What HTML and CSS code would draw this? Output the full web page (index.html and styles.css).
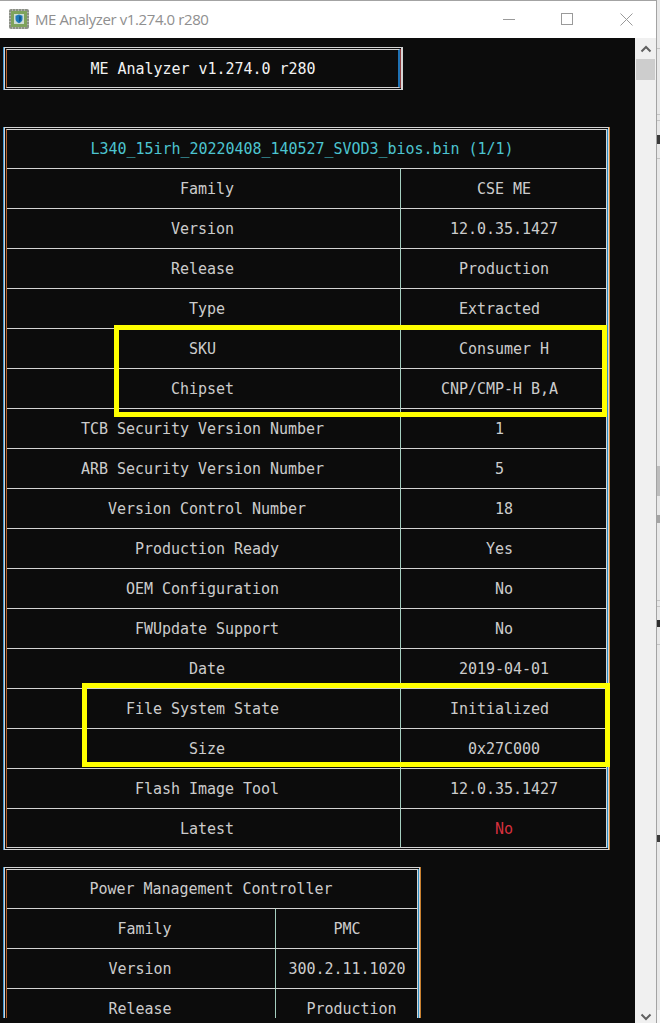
FILE: index.html
```html
<!DOCTYPE html>
<html lang="en">
<head>
<meta charset="utf-8">
<title>ME Analyzer v1.274.0 r280</title>
<link rel="stylesheet" href="styles.css">
</head>
<body>
<div class="window">
  <header class="titlebar">
    <svg class="app-icon" viewBox="0 0 20 20" width="20" height="20" aria-hidden="true">
      <rect x="0" y="0" width="20" height="20" rx="2" fill="#8b8f86"/>
      <path d="M0 3.500h20M0 6.500h20M0 9.500h20M0 12.500h20M0 15.500h20M3.500 0v20M6.500 0v20M9.500 0v20M12.500 0v20M15.500 0v20" stroke="#d9dcd4" stroke-width="1" opacity=".5"/>
      <rect x="2" y="2" width="16" height="16" fill="#7fa35c"/>
      <rect x="5" y="5" width="10" height="10" fill="#cfdcd6"/>
      <path d="M10 5.500l3.500 1.200v3.200c0 2-1.500 3.400-3.500 4.300-2-.9-3.500-2.300-3.500-4.300V6.700z" fill="#1f78b8"/>
      <path d="M10 7l2 .8v2.200c0 1.200-.8 2-2 2.700z" fill="#14558c"/>
    </svg>
    <span class="window-title">ME Analyzer v1.274.0 r280</span>
    <div class="controls">
      <svg class="ctl ctl-min" width="12" height="12" viewBox="0 0 12 12" aria-hidden="true"><path d="M0 6.500h12" stroke="#9a9a9a"/></svg>
      <svg class="ctl ctl-max" width="12" height="12" viewBox="0 0 12 12" aria-hidden="true"><rect x=".5" y=".5" width="11" height="11" fill="none" stroke="#9a9a9a"/></svg>
      <svg class="ctl ctl-close" width="13" height="13" viewBox="0 0 13 13" aria-hidden="true"><path d="M.5.5l12 12M12.500.5l-12 12" stroke="#9a9a9a" fill="none"/></svg>
    </div>
  </header>
  <div class="client">
    <main class="console">
      <div class="viewport">
        <section class="frame frame-banner">
          <div class="frame-inner">
            <div class="banner">ME Analyzer v1.274.0 r280</div>
          </div>
        </section>

        <section class="frame frame-main">
          <div class="frame-inner">
            <table class="grid grid-main">
              <colgroup><col class="c1-main"><col></colgroup>
              <tr><th colspan="2" class="file">L340_15irh_20220408_140527_SVOD3_bios.bin (1/1)</th></tr>
              <tr><td class="even">Family</td><td class="even">CSE ME</td></tr>
              <tr><td>Version</td><td class="even">12.0.35.1427</td></tr>
              <tr><td>Release</td><td class="even">Production</td></tr>
              <tr><td class="even">Type</td><td>Extracted</td></tr>
              <tr><td>SKU</td><td class="even">Consumer H</td></tr>
              <tr><td>Chipset</td><td>CNP/CMP-H B,A</td></tr>
              <tr><td>TCB Security Version Number</td><td>1</td></tr>
              <tr><td>ARB Security Version Number</td><td>5</td></tr>
              <tr><td class="even">Version Control Number</td><td class="even">18</td></tr>
              <tr><td class="even">Production Ready</td><td>Yes</td></tr>
              <tr><td>OEM Configuration</td><td class="even">No</td></tr>
              <tr><td class="even">FWUpdate Support</td><td class="even">No</td></tr>
              <tr><td class="even">Date</td><td class="even">2019-04-01</td></tr>
              <tr><td>File System State</td><td>Initialized</td></tr>
              <tr><td class="even">Size</td><td class="even">0x27C000</td></tr>
              <tr><td class="even">Flash Image Tool</td><td class="even">12.0.35.1427</td></tr>
              <tr><td class="even">Latest</td><td class="even alert">No</td></tr>
            </table>
          </div>
        </section>

        <section class="frame frame-pmc">
          <div class="frame-inner">
            <table class="grid grid-pmc">
              <colgroup><col class="c1-pmc"><col></colgroup>
              <tr><th colspan="2">Power Management Controller</th></tr>
              <tr><td class="even">Family</td><td>PMC</td></tr>
              <tr><td>Version</td><td>300.2.11.1020</td></tr>
              <tr><td>Release</td><td class="even">Production</td></tr>
            </table>
          </div>
        </section>
      </div>
      <div class="mark mark-sku"></div>
      <div class="mark mark-fs"></div>
    </main>
    <aside class="scrollbar">
      <svg width="12" height="8" viewBox="0 0 12 8" aria-hidden="true"><path d="M1.500 6.500L6 2l4.500 4.500" fill="none" stroke="#606060" stroke-width="2"/></svg>
      <div class="thumb"></div>
      <svg class="arrow-down" width="12" height="8" viewBox="0 0 12 8" aria-hidden="true"><path d="M1.500 1.500L6 6l4.500-4.500" fill="none" stroke="#606060" stroke-width="2"/></svg>
    </aside>
  </div>
</div>
<svg class="backdrop" width="3" height="1023" viewBox="0 0 3 1023" aria-hidden="true">
  <rect width="3" height="1010" fill="#e8e8e8"/>
  <rect y="1010" width="3" height="13" fill="#f7f7f7"/>
  <path d="M0 48.500h3M0 114.500h3M0 120.500h3M0 158.500h3M0 600.500h3M0 606.500h3M0 644.500h3" stroke="#c4c4c4"/>
  <rect y="135" width="3" height="9" fill="#3a3a3a"/>
  <rect y="466" width="3" height="30" fill="#bdbdbd"/>
  <rect y="515" width="3" height="8" fill="#a4a4a4"/>
  <rect y="620" width="3" height="7" fill="#2e2e2e"/>
  <rect y="835" width="3" height="7" fill="#3a3a3a"/>
</svg>
</body>
</html>
```

FILE: styles.css
```css
html, body {
  margin: 0;
  padding: 0;
  height: 100%;
}

body {
  display: flex;
  width: 660px;
  height: 1023px;
  overflow: hidden;
  background: #e8e8e8;
}

.window {
  display: flex;
  flex-direction: column;
  width: 657px;
  flex: none;
  box-sizing: border-box;
  border-top: 1px solid #a3a3a3;
  border-right: 1px solid #a3a3a3;
}

.backdrop {
  flex: none;
  display: block;
}

.titlebar {
  display: flex;
  align-items: center;
  height: 37px;
  flex: none;
  background: #fff;
  padding-left: 9px;
  box-sizing: border-box;
}

.app-icon {
  flex: none;
  margin-top: -1px;
}

.window-title {
  margin-left: 6px;
  margin-top: -1px;
  font: 15px/20px "Open Sans", "Noto Sans", sans-serif;
  letter-spacing: -0.4px;
  color: #8f8f8f;
  white-space: nowrap;
}

.controls {
  display: flex;
  margin-left: auto;
  align-items: center;
}

.ctl {
  display: block;
  flex: none;
  margin-top: -1px;
}

.ctl-max {
  margin-left: 46px;
}

.ctl-close {
  margin-left: 47px;
  margin-right: 23px;
}

.client {
  display: flex;
  flex: 1;
  min-height: 0;
}

.console {
  position: relative;
  width: 635px;
  flex: none;
  background: #0c0c0c;
  padding-bottom: 5px;
  box-sizing: border-box;
}

.viewport {
  height: 100%;
  overflow: hidden;
  padding: 9px 0 0 4px;
  box-sizing: border-box;
}

.frame {
  box-sizing: border-box;
  border: 1px solid #d4d4d4;
  padding: 1px;
  box-shadow: -1px 0 0 #3b93cf, 1px 0 0 #c9802f;
}

.frame-inner {
  border: 1px solid #d4d4d4;
  border-left-color: #b5622c;
  box-shadow: 1px 0 0 #2d8fc4;
}

.frame-banner {
  width: 398px;
  box-shadow: -1px 0 0 #3b93cf, 1px 0 0 #d4d4d4;
}

.frame-banner .frame-inner {
  border-right-color: #1f72b4;
  box-shadow: 1px 0 0 #8e3c3c, inset -1px 0 0 #1f72b4;
}

.frame-main {
  width: 605px;
  margin-top: 37px;
}

.frame-pmc {
  width: 416px;
  margin-top: 17px;
}

.banner,
.grid {
  font: 15px/20px "DejaVu Sans Mono", monospace;
  letter-spacing: -0.03px;
  color: #cccccc;
}

.banner {
  display: flex;
  justify-content: center;
  align-items: center;
  height: 37px;
  color: #f2f2f2;
  white-space: pre;
}

.grid {
  width: 100%;
  table-layout: fixed;
  border-collapse: separate;
  border-spacing: 0;
}

.c1-main {
  width: 393px;
}

.c1-pmc {
  width: 268px;
}

.grid th,
.grid td {
  box-sizing: border-box;
  height: 40px;
  padding: 0;
  text-align: center;
  font-weight: normal;
  white-space: pre;
  border-top: 1px solid #d4d4d4;
}

.grid tr:first-child th {
  height: 38px;
  border-top: 0;
}

.grid tr:last-child td {
  height: 39px;
  padding-top: 2px;
}

.grid td + td {
  border-left: 1px solid #a5cfc0;
}

.grid-main td {
  padding-right: 2px;
}

.grid-main td.even {
  padding-left: 9px;
}

.grid-main td + td {
  padding-right: 8px;
}

.grid-main .file {
  padding-right: 9px;
  color: #4cc4d0;
}

.grid-pmc th {
  padding-right: 2px;
}

.grid-pmc td {
  padding-right: 2px;
}

.grid-pmc td.even {
  padding-left: 9px;
}

.grid-pmc td + td {
  padding-left: 1px;
  padding-right: 0;
}

.grid-pmc td + td.even {
  padding-left: 10px;
}

.grid td.alert {
  color: #d6303e;
}

.mark {
  position: absolute;
  box-sizing: border-box;
  border: 5px solid #ffff00;
}

.mark-sku {
  left: 114px;
  top: 287px;
  width: 493px;
  height: 92px;
}

.mark-fs {
  left: 82px;
  top: 645px;
  width: 528px;
  height: 84px;
}

.scrollbar {
  display: flex;
  flex-direction: column;
  align-items: center;
  width: 21px;
  flex: none;
  background: #f0f0f0;
}

.scrollbar svg {
  display: block;
  flex: none;
  margin-top: 7px;
}

.thumb {
  width: 19px;
  height: 21px;
  margin-top: 6px;
  background: #cdcdcd;
}

.scrollbar .arrow-down {
  margin-top: auto;
  margin-bottom: 2px;
}
```
